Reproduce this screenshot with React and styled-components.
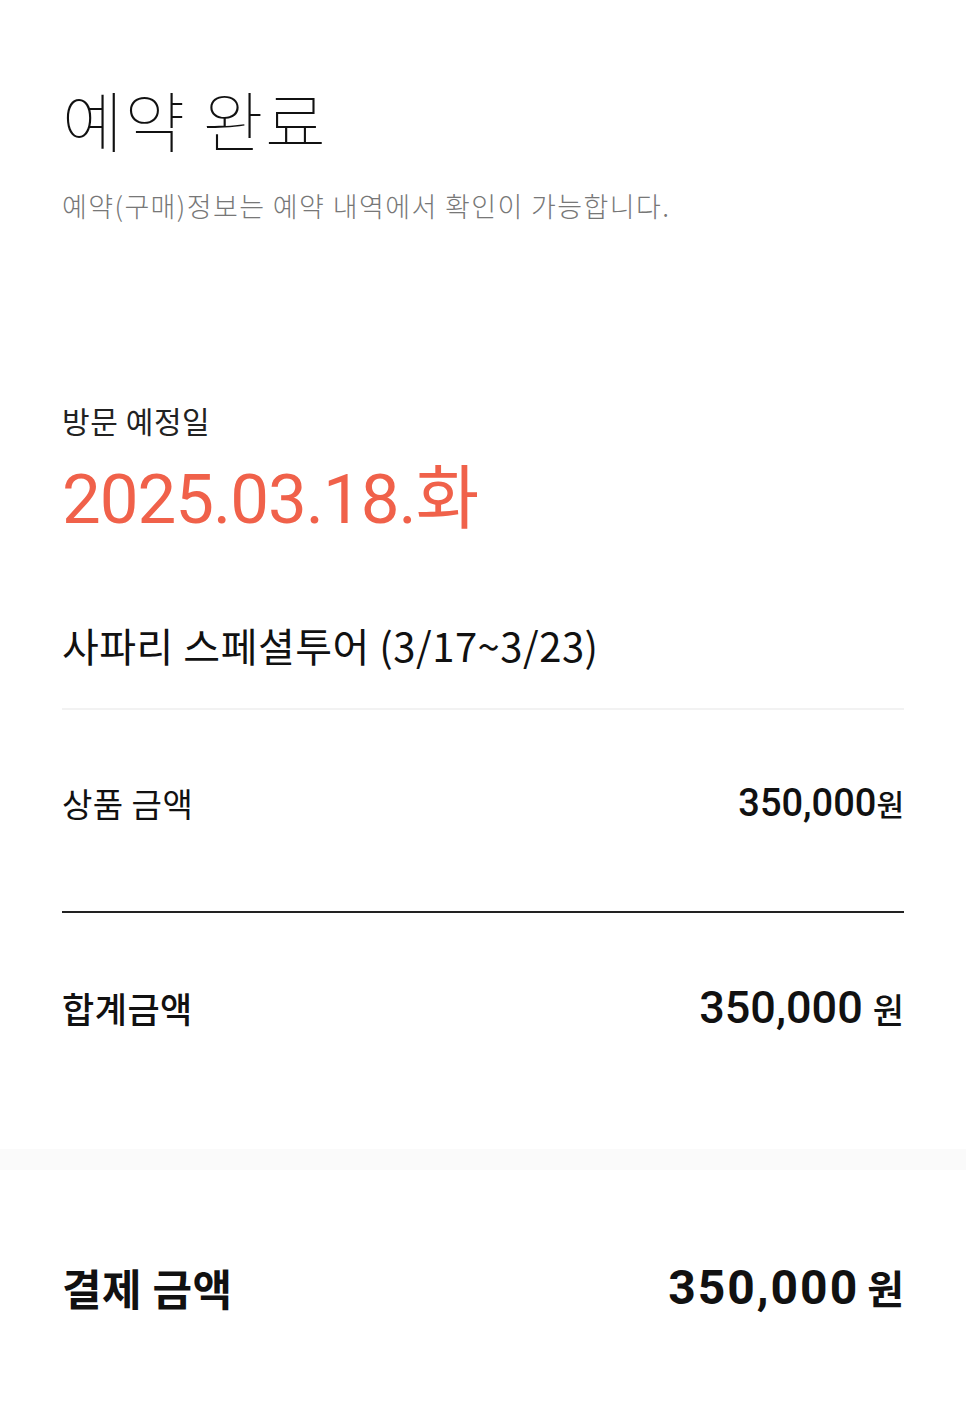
import React from "react";
import styled, { createGlobalStyle } from "styled-components";

const Global = createGlobalStyle`
  html, body { margin: 0; padding: 0; background: #fff; }
  body { font-family: "Noto Sans CJK KR", "Noto Sans", sans-serif; color: #111; }
  * { box-sizing: border-box; }
`;

const Page = styled.main`
  width: 966px;
  padding-top: 80px;
  padding-bottom: 80px;
`;

const Section = styled.section`
  padding: 0 62px;
`;

const Title = styled.h1`
  margin: 0;
  font-size: 66px;
  line-height: 76px;
  font-weight: 100;
  letter-spacing: 1.6px;
  color: #111;
`;

const Sub = styled.p`
  margin: 32px 0 0;
  font-size: 27px;
  line-height: 36px;
  font-weight: 300;
  letter-spacing: 1.4px;
  color: #777;
`;

const Label = styled.div`
  margin-top: 176px;
  font-size: 30px;
  line-height: 40px;
  font-weight: 400;
  letter-spacing: 0.6px;
  color: #222;
`;

const DateText = styled.div`
  margin-top: 20px;
  font-family: Roboto, "Noto Sans CJK KR", sans-serif;
  font-size: 69px;
  line-height: 80px;
  font-weight: 400;
  color: #f0614a;
  letter-spacing: -1px;
`;

const Product = styled.div`
  margin-top: 80px;
  font-size: 40px;
  line-height: 50px;
  font-weight: 400;
  letter-spacing: 0.5px;
  color: #111;
`;

const Divider = styled.hr`
  margin: ${(p) => p.$mt}px 0 0;
  border: 0;
  height: 2px;
  background: ${(p) => p.$color};
`;

const Row = styled.div`
  margin-top: ${(p) => p.$mt}px;
  display: flex;
  justify-content: space-between;
  align-items: center;
  height: ${(p) => p.$h}px;
`;

const RowLabel = styled.span`
  font-size: ${(p) => p.$size}px;
  font-weight: ${(p) => p.$weight};
  letter-spacing: ${(p) => p.$ls || 0}px;
  color: #111;
`;

const Amount = styled.span`
  font-family: Roboto, "Noto Sans CJK KR", sans-serif;
  font-size: ${(p) => p.$size}px;
  font-weight: ${(p) => p.$weight};
  letter-spacing: ${(p) => p.$ls || 0}px;
  color: #111;
  display: flex;
  align-items: baseline;
  gap: ${(p) => p.$gap}px;
`;

const Won = styled.span`
  font-family: "Noto Sans CJK KR", sans-serif;
  font-size: ${(p) => p.$size}px;
  letter-spacing: 0;
`;

const Band = styled.div`
  margin-top: 114px;
  height: 21px;
  background: #fafafa;
`;

export default function App() {
  return (
    <>
      <Global />
      <Page>
        <Section>
          <Title>예약 완료</Title>
          <Sub>예약(구매)정보는 예약 내역에서 확인이 가능합니다.</Sub>
          <Label>방문 예정일</Label>
          <DateText>2025.03.18.화</DateText>
          <Product>사파리 스페셜투어 (3/17~3/23)</Product>
          <Divider $mt={38} $color="#f2f2f2" />
          <Row $mt={68} $h={50}>
            <RowLabel $size={33} $weight={400} $ls={0.5}>상품 금액</RowLabel>
            <Amount $size={38} $weight={500} $gap={0}>
              350,000<Won $size={30}>원</Won>
            </Amount>
          </Row>
          <Divider $mt={83} $color="#222" />
          <Row $mt={66} $h={56}>
            <RowLabel $size={35} $weight={500} $ls={0.5}>합계금액</RowLabel>
            <Amount $size={45} $weight={500} $gap={10}>
              350,000<Won $size={34}>원</Won>
            </Amount>
          </Row>
        </Section>
        <Band />
        <Section>
          <Row $mt={87} $h={60}>
            <RowLabel $size={43} $weight={700} $ls={0.5}>결제 금액</RowLabel>
            <Amount $size={48} $weight={700} $gap={8} $ls={2}>
              350,000<Won $size={40}>원</Won>
            </Amount>
          </Row>
        </Section>
      </Page>
    </>
  );
}
